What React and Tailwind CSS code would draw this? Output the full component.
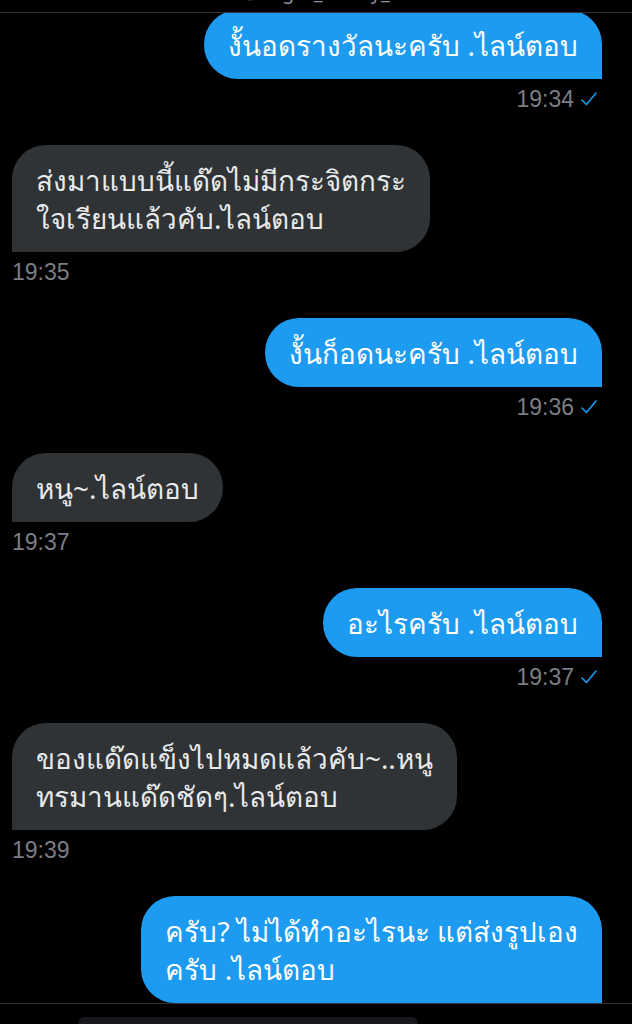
import React from "react";

const messages = [
  { me: true, lines: ["งั้นอดรางวัลนะครับ .ไลน์ตอบ"], time: "19:34" },
  { me: false, lines: ["ส่งมาแบบนี้แด๊ดไม่มีกระจิตกระ", "ใจเรียนแล้วคับ.ไลน์ตอบ"], time: "19:35" },
  { me: true, lines: ["งั้นก็อดนะครับ .ไลน์ตอบ"], time: "19:36" },
  { me: false, lines: ["หนู~.ไลน์ตอบ"], time: "19:37" },
  { me: true, lines: ["อะไรครับ .ไลน์ตอบ"], time: "19:37" },
  { me: false, lines: ["ของแด๊ดแข็งไปหมดแล้วคับ~..หนู", "ทรมานแด๊ดชัดๆ.ไลน์ตอบ"], time: "19:39" },
  { me: true, lines: ["ครับ? ไม่ได้ทำอะไรนะ แต่ส่งรูปเอง", "ครับ .ไลน์ตอบ"], time: "" },
];

const font = { fontFamily: '"Noto Sans", "Noto Sans CJK SC", sans-serif' };

function Check() {
  return (
    <svg width="18" height="16" viewBox="0 0 18 16" className="ml-[6px]">
      <polyline
        points="2,9 6.5,13.5 16,2"
        fill="none"
        stroke="#1d9bf0"
        strokeWidth="1.6"
        strokeLinecap="round"
        strokeLinejoin="round"
      />
    </svg>
  );
}

function Message({ me, lines, time, first }) {
  return (
    <div className={`flex flex-col ${me ? "items-end pr-[30px]" : "items-start pl-[12px]"} ${first ? "-mt-[3px]" : ""}`}>
      <div
        className={`px-[24px] py-[15.5px] text-[27.8px] leading-[38px] rounded-[34px] ${
          me ? "bg-[#1d9bf0] text-white rounded-br-none" : "bg-[#2f3336] text-[#e7e9ea] rounded-bl-none"
        }`}
      >
        {lines.map((l, i) => (
          <div key={i} className="whitespace-nowrap">
            {l}
          </div>
        ))}
      </div>
      {time && (
        <div className={`mt-[8px] h-[24px] flex items-center text-[23px] text-[#7a7e83] ${me ? "pr-[4px]" : ""}`} style={{ fontFamily: '"Liberation Sans", Arial, sans-serif' }}>
          <span>{time}</span>
          {me && <Check />}
        </div>
      )}
    </div>
  );
}

export default function App() {
  return (
    <div className="h-[1024px] w-[632px] bg-black flex flex-col overflow-hidden" style={font}>
      {/* header, scrolled mostly out of view */}
      <div className="h-[12px] flex justify-center items-end overflow-hidden border-b border-[#2f3336] box-content">
        <span className="text-[20px] leading-[20px] text-[#8b8f94] -translate-y-[10px]">@sugar_daddy_</span>
      </div>
      <div className="flex-1 flex flex-col gap-[34px] overflow-hidden">
        {messages.map((m, i) => (
          <Message key={i} {...m} first={i === 0} />
        ))}
      </div>
      <div className="h-[21px] border-t border-[#2f3336] flex flex-col pl-[78px] pr-[214px] pt-[13px]">
        <div className="flex-1 bg-[#16181c] rounded-t-[16px]" />
      </div>
    </div>
  );
}
